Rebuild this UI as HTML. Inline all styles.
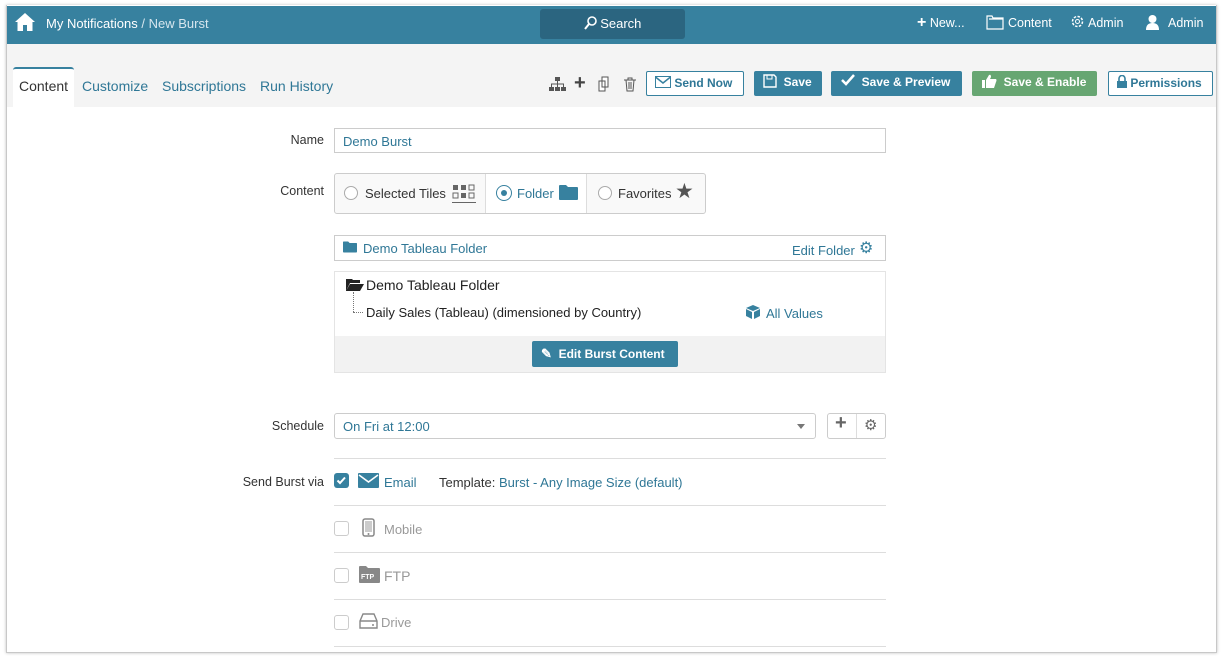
<!DOCTYPE html>
<html><head><style>
*{box-sizing:border-box;margin:0;padding:0}
body{width:1223px;height:656px;background:#fff;font-family:"Liberation Sans",sans-serif;font-size:13px;color:#333;position:relative;overflow:hidden}
.frame{position:absolute;left:6px;top:5px;width:1211px;height:648px;border:1px solid #c8c8c8;border-top:none;background:#fff;box-shadow:0 0 3px rgba(0,0,0,.25)}
.hdr{position:absolute;left:7px;top:6px;width:1209px;height:38px;background:#37819f;color:#fff}
.abs{position:absolute}
.tabbar{position:absolute;left:7px;top:44px;width:1209px;height:63px;background:#f4f4f4}
.tab{position:absolute;top:78px;font-size:14px;color:#2f7796}
.btn{position:absolute;top:71px;height:25px;border-radius:2px;font-size:12px;font-weight:bold;line-height:23px;color:#fff;padding-left:8px}
.lbl{position:absolute;font-size:12.5px;color:#333;text-align:right;width:120px;left:204px}
.blue{color:#2f7796}
.inp{position:absolute;border:1px solid #ccc;background:#fff}
.line{position:absolute;left:334px;width:552px;height:1px;background:#ddd}
.cb{position:absolute;left:334px;width:15px;height:15px;border:1px solid #ccc;border-radius:3px}
</style></head><body>
<div class="frame"></div>
<div class="hdr">
 <svg class="abs" style="left:7px;top:6px" width="22" height="20" viewBox="0 0 22 20"><path d="M11 1 L1 10 L3.5 10 L3.5 19 L9 19 L9 13 L13 13 L13 19 L18.5 19 L18.5 10 L21 10 Z" fill="#fff"/></svg>
 <div class="abs" style="left:39px;top:10px;font-size:13px">My Notifications <span style="color:#d6e6ee">/ New Burst</span></div>
 <div class="abs" style="left:533px;top:3px;width:145px;height:30px;background:#2b6580;border-radius:3px;text-align:center;line-height:30px;font-size:13px"><svg width="13" height="14" viewBox="0 0 13 14" style="vertical-align:-2px"><circle cx="8" cy="5" r="4" stroke="#fff" stroke-width="1.6" fill="none"/><path d="M5 8 L1 13" stroke="#fff" stroke-width="2"/></svg> Search</div>
 <div class="abs" style="left:910px;top:10px;font-size:12.5px"><b style="font-size:16px;line-height:12px">+</b> New...</div>
 <svg class="abs" style="left:979px;top:9px" width="18" height="15" viewBox="0 0 18 15"><path d="M1 1h5l1 2h10v11H1z M3 4h14" stroke="#fff" fill="none" stroke-width="1.2"/></svg>
 <div class="abs" style="left:1001px;top:10px;font-size:12.5px">Content</div>
 <svg class="abs" style="left:1063px;top:8px" width="15" height="15" viewBox="0 0 15 15"><circle cx="7.5" cy="7.5" r="5" stroke="#fff" stroke-width="1.5" fill="none" stroke-dasharray="2.5 1.4"/><circle cx="7.5" cy="7.5" r="2" stroke="#fff" fill="none"/></svg>
 <div class="abs" style="left:1081px;top:10px;font-size:12.5px">Admin</div>
 <svg class="abs" style="left:1138px;top:8px" width="15" height="16" viewBox="0 0 15 16"><circle cx="7.5" cy="5" r="4" fill="#fff"/><path d="M1 16 Q1 9 7.5 9 Q14 9 14 16z" fill="#fff"/></svg>
 <div class="abs" style="left:1161px;top:10px;font-size:12.5px">Admin</div>
</div>
<div class="tabbar"></div>
<div class="abs" style="left:13px;top:67px;width:61px;height:41px;background:#fff;border-top:2px solid #37819f;border-radius:3px 3px 0 0"></div>
<div class="tab" style="left:19px;color:#333">Content</div>
<div class="tab" style="left:82px">Customize</div>
<div class="tab" style="left:162px">Subscriptions</div>
<div class="tab" style="left:260px">Run History</div>
<svg class="abs" style="left:549px;top:77px" width="17" height="15" viewBox="0 0 17 15"><rect x="6" y="0" width="5" height="4" fill="#555"/><path d="M8.5 4v3M2.5 10V7h12v3M8.5 7v3" stroke="#555" fill="none"/><rect x="0" y="10" width="5" height="4" fill="#555"/><rect x="6" y="10" width="5" height="4" fill="#555"/><rect x="12" y="10" width="5" height="4" fill="#555"/></svg>
<div class="abs" style="left:574px;top:72px;font-size:20px;font-weight:bold;color:#444">+</div>
<svg class="abs" style="left:598px;top:76px" width="15" height="16" viewBox="0 0 15 16"><path d="M4 1h6v10H4z M1 5h6v10H1z" stroke="#555" fill="#fff"/></svg>
<svg class="abs" style="left:624px;top:77px" width="12" height="15" viewBox="0 0 12 15"><path d="M0 3h12M4 3V1h4v2M2 3l1 11h6l1-11M5 5v7M7 5v7" stroke="#555" fill="none"/></svg>
<div class="btn" style="left:646px;width:98px;border:1px solid #37819f;background:#fff;color:#2f7796"><svg width="16" height="12" viewBox="0 0 16 12" style="vertical-align:-1px"><rect x="0.5" y="0.5" width="15" height="11" fill="none" stroke="#37819f"/><path d="M0.5 1l7.5 6 7.5-6" stroke="#37819f" fill="none" stroke-width="1.5"/></svg> Send Now</div>
<div class="btn" style="left:754px;width:68px;background:#37819f;padding-left:9px"><svg width="14" height="14" viewBox="0 0 14 14" style="vertical-align:-2px"><path d="M1 1h10l2 2v10H1z" stroke="#fff" fill="none" stroke-width="1.4"/><rect x="4" y="1" width="5" height="4" fill="none" stroke="#fff"/></svg> &nbsp;Save</div>
<div class="btn" style="left:831px;width:131px;background:#37819f;padding-left:10px"><svg width="14" height="12" viewBox="0 0 14 12"><path d="M1 6l4 4 8-9" stroke="#fff" stroke-width="2.5" fill="none"/></svg> &nbsp;Save &amp; Preview</div>
<div class="btn" style="left:972px;width:125px;background:#67a672;padding-left:10px"><svg width="15" height="14" viewBox="0 0 15 14" style="vertical-align:-2px"><rect x="0" y="6" width="3" height="8" fill="#fff"/><path d="M4 6 L7 1 Q9 0 9 3 L8 5 H14 Q15 6 14 8 L12 14 H4z" fill="#fff"/></svg> &nbsp;Save &amp; Enable</div>
<div class="btn" style="left:1108px;width:105px;border:1px solid #37819f;background:#fff;color:#2f7796"><svg width="10" height="13" viewBox="0 0 10 13" style="vertical-align:-1px"><path d="M2 6V3.5a3 3 0 0 1 6 0V6" stroke="#37819f" stroke-width="1.6" fill="none"/><rect x="0" y="6" width="10" height="7" fill="#37819f"/></svg> Permissions</div>

<div class="lbl" style="top:133px">Name</div>
<div class="inp" style="left:334px;top:128px;width:552px;height:25px;padding:5px 8px" ><span class="blue">Demo Burst</span></div>
<div class="lbl" style="top:184px">Content</div>
<div class="inp" style="left:334px;top:173px;width:372px;height:41px;border-radius:3px;background:#f9f9f9"></div>
<div class="abs" style="left:485px;top:174px;width:102px;height:39px;background:#fff;border-left:1px solid #ddd;border-right:1px solid #ddd"></div>
<div class="abs" style="left:344px;top:186px;width:14px;height:14px;border:1px solid #aaa;border-radius:50%;background:#fff"></div>
<div class="abs" style="left:365px;top:186px">Selected Tiles</div>
<svg class="abs" style="left:452px;top:184px" width="24" height="20" viewBox="0 0 24 20"><g fill="#666"><rect x="1" y="1" width="5" height="5"/><rect x="9" y="1" width="5" height="5"/><rect x="17" y="1" width="5" height="5" fill="none" stroke="#666"/><rect x="1" y="9" width="5" height="5" fill="none" stroke="#666"/><rect x="9" y="9" width="5" height="5"/><rect x="17" y="9" width="5" height="5" fill="none" stroke="#666"/><rect x="0" y="18" width="24" height="1"/></g></svg>
<div class="abs" style="left:496px;top:185px;width:16px;height:16px;border:1.5px solid #37819f;border-radius:50%;background:#fff"><div style="margin:3.5px;width:6px;height:6px;border-radius:50%;background:#37819f"></div></div>
<div class="abs blue" style="left:517px;top:186px">Folder</div>
<svg class="abs" style="left:559px;top:185px" width="19" height="15" viewBox="0 0 19 15"><path d="M0 1Q0 0 1 0H7L9 2H18Q19 2 19 3V14Q19 15 18 15H1Q0 15 0 14Z" fill="#37819f"/></svg>
<div class="abs" style="left:598px;top:186px;width:14px;height:14px;border:1px solid #aaa;border-radius:50%;background:#fff"></div>
<div class="abs" style="left:618px;top:186px">Favorites</div>
<div class="abs" style="left:675px;top:179px;font-size:21px;color:#555">★</div>

<div class="inp" style="left:334px;top:235px;width:552px;height:26px"></div>
<svg class="abs" style="left:343px;top:241px" width="14" height="12" viewBox="0 0 19 15"><path d="M0 1Q0 0 1 0H7L9 2H18Q19 2 19 3V14Q19 15 18 15H1Q0 15 0 14Z" fill="#37819f"/></svg>
<div class="abs blue" style="left:363px;top:241px">Demo Tableau Folder</div>
<div class="abs blue" style="left:792px;top:243px">Edit Folder</div>
<div class="abs" style="left:859px;top:238px;font-size:16px;color:#37819f">⚙</div>
<div class="inp" style="left:334px;top:271px;width:552px;height:102px;border-color:#e4e4e4"></div>
<div class="abs" style="left:335px;top:336px;width:550px;height:36px;background:#f2f2f2"></div>
<svg class="abs" style="left:346px;top:278px" width="18" height="13" viewBox="0 0 18 13"><path d="M0 1H6L7 2H14V5H4L0 13Z M4 6H18L14 13H0Z" fill="#222"/></svg>
<div class="abs" style="left:366px;top:277px;font-size:14px;color:#222">Demo Tableau Folder</div>
<div class="abs" style="left:353px;top:292px;width:1px;height:20px;border-left:1px dotted #777"></div>
<div class="abs" style="left:353px;top:312px;width:10px;border-top:1px dotted #777"></div>
<div class="abs" style="left:366px;top:305px;color:#222">Daily Sales (Tableau) (dimensioned by Country)</div>
<svg class="abs" style="left:746px;top:305px" width="14" height="14" viewBox="0 0 14 14"><path d="M7 0L14 3L7 6L0 3Z M0 4L6 7V14L0 11Z M14 4L8 7V14L14 11Z" fill="#37819f"/></svg>
<div class="abs blue" style="left:766px;top:306px">All Values</div>
<div class="abs" style="left:532px;top:341px;width:146px;height:26px;background:#37819f;border-radius:2px;color:#fff;font-weight:bold;font-size:12px;line-height:26px;padding-left:9px"><span style="font-size:13px">✎</span>&nbsp; Edit Burst Content</div>

<div class="lbl" style="top:419px">Schedule</div>
<div class="inp" style="left:334px;top:413px;width:482px;height:26px;border-radius:3px;padding:5px 8px"><span class="blue">On Fri at 12:00</span></div>
<div class="abs" style="left:797px;top:424px;border:4px solid transparent;border-top:5px solid #777"></div>
<div class="inp" style="left:827px;top:413px;width:59px;height:26px;border-radius:3px"></div>
<div class="abs" style="left:856px;top:414px;width:1px;height:24px;background:#ddd"></div>
<div class="abs" style="left:835px;top:412px;font-size:20px;font-weight:bold;color:#666">+</div>
<div class="abs" style="left:864px;top:416px;font-size:15px;color:#666">⚙</div>

<div class="line" style="top:458px"></div>
<div class="lbl" style="top:475px">Send Burst via</div>
<div class="abs" style="left:334px;top:473px;width:15px;height:15px;background:#37819f;border-radius:3px"><svg width="15" height="15" viewBox="0 0 15 15"><path d="M3.5 7.5l2.5 2.5 5-5.5" stroke="#fff" stroke-width="2" fill="none"/></svg></div>
<svg class="abs" style="left:358px;top:473px" width="21" height="15" viewBox="0 0 21 15"><rect width="21" height="15" rx="1" fill="#37819f"/><path d="M1 2l9.5 7 9.5-7" stroke="#fff" stroke-width="1.6" fill="none"/></svg>
<div class="abs blue" style="left:384px;top:475px">Email</div>
<div class="abs" style="left:439px;top:475px">Template: <span class="blue">Burst - Any Image Size (default)</span></div>
<div class="line" style="top:505px"></div>
<div class="cb" style="top:521px"></div>
<svg class="abs" style="left:362px;top:518px" width="13" height="19" viewBox="0 0 13 19"><rect x="1" y="1" width="11" height="17" rx="2" stroke="#888" stroke-width="1.5" fill="none"/><rect x="3" y="3" width="7" height="11" fill="#ccc"/><circle cx="6.5" cy="16" r="1" fill="#888"/></svg>
<div class="abs" style="left:384px;top:522px;color:#999">Mobile</div>
<div class="line" style="top:552px"></div>
<div class="cb" style="top:568px"></div>
<svg class="abs" style="left:359px;top:566px" width="21" height="17" viewBox="0 0 21 17"><path d="M0 1Q0 0 1 0H7L9 2H20Q21 2 21 3V16Q21 17 20 17H1Q0 17 0 16Z" fill="#888"/><text x="2" y="13" font-size="7" fill="#fff" font-family="Liberation Sans" font-weight="bold">FTP</text></svg>
<div class="abs" style="left:384px;top:568px;font-size:14px;color:#999">FTP</div>
<div class="line" style="top:599px"></div>
<div class="cb" style="top:615px"></div>
<svg class="abs" style="left:359px;top:613px" width="19" height="16" viewBox="0 0 19 16"><path d="M4 1H15L18 8V15H1V8Z M1 8H18" stroke="#888" stroke-width="1.4" fill="none"/><circle cx="14" cy="12" r="1" fill="#888"/></svg>
<div class="abs" style="left:381px;top:615px;color:#999">Drive</div>
<div class="line" style="top:646px"></div>
</body></html>
